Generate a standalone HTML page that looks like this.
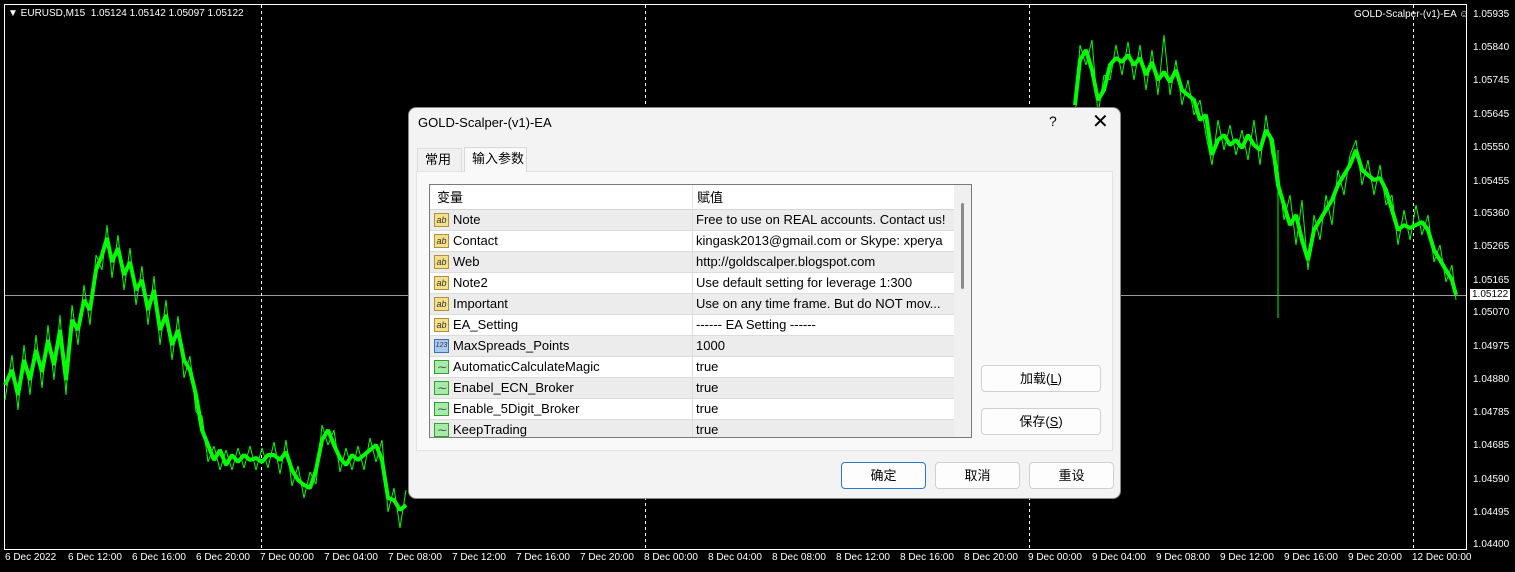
<!DOCTYPE html>
<html><head><meta charset="utf-8"><style>
*{margin:0;padding:0;box-sizing:border-box}
body{width:1515px;height:572px;background:#000;position:relative;overflow:hidden;font-family:"Liberation Sans","Noto Sans CJK SC",sans-serif}
.ax{position:absolute;color:#fff;font-size:10px;white-space:nowrap}
.dlg{position:absolute;left:408px;top:107px;width:713px;height:392px;background:#f3f3f3;border:1px solid #888;border-radius:8px;overflow:hidden;font-size:13px;color:#000}
.row{position:absolute;left:0;width:524px;height:21px;border-bottom:1px solid #dcdcdc}
.row span{position:absolute;top:2px}
.ic{position:absolute;left:4px;top:3px;width:15px;height:14px;border:1px solid #b09040;background:#f5e08a;font-size:9px;line-height:12px;text-align:center;color:#333}
.btn{position:absolute;background:#fdfdfd;border:1px solid #d0d0d0;border-radius:4px;text-align:center;font-size:13px;line-height:25px}
</style></head><body>
<svg width="1515" height="572" style="position:absolute;left:0;top:0">
<rect x="4.5" y="4.5" width="1462" height="545" fill="none" stroke="#fff" stroke-width="1"/>
<line x1="5" y1="295.5" x2="1466" y2="295.5" stroke="#9a9a9a"/>
<g stroke="#fff" stroke-dasharray="3,3"><line x1="261.5" y1="5" x2="261.5" y2="549"/><line x1="645.5" y1="5" x2="645.5" y2="549"/><line x1="1029.5" y1="5" x2="1029.5" y2="549"/><line x1="1413.5" y1="5" x2="1413.5" y2="549"/></g>
<g fill="none" stroke="#00ff00" stroke-linejoin="bevel">
<polyline stroke-width="4" points="5,385 12,370 18,395 24,360 30,380 36,350 42,372 48,340 54,365 60,330 66,380 72,320 78,330 84,300 90,310 96,270 102,255 107,238 112,262 118,248 124,275 130,262 136,290 142,280 148,310 154,290 160,330 166,315 172,345 178,330 184,360 190,370 196,395 202,430 208,445 214,460 220,450 226,465 232,455 238,462 244,455 250,460 256,458 262,462 268,455 274,455 280,460 286,452 292,470 298,480 304,485 310,488 316,470 322,440 328,430 334,445 340,458 346,465 352,455 358,460 364,455 370,450 376,445 382,460 388,498 394,500 400,510 406,505"/>
<polyline stroke-width="1" points="5,400 12,355 18,410 24,345 30,395 36,335 42,388 48,325 54,380 60,315 66,395 72,305 78,345 84,285 90,325 96,255 102,270 107,225 112,278 118,235 124,290 130,248 136,305 142,266 148,325 154,276 160,345 166,300 172,360 178,316 184,378 190,356 196,412 202,416 208,462 214,446 220,470 226,450 232,470 238,448 244,468 250,446 256,470 262,448 268,468 274,442 280,474 286,440 292,486 298,466 304,498 310,472 316,484 322,425 328,445 334,430 340,472 346,448 352,470 358,446 364,470 370,438 376,462 382,440 388,512 394,488 400,528 406,490"/>
<polyline stroke-width="4" points="1075,105 1080,60 1086,50 1092,70 1098,100 1104,90 1110,65 1116,58 1122,62 1128,55 1134,65 1140,58 1146,75 1152,62 1158,80 1164,72 1170,82 1176,70 1182,90 1188,95 1194,100 1200,120 1206,115 1212,155 1218,140 1224,135 1230,145 1236,140 1242,148 1248,135 1254,145 1260,150 1266,130 1272,140 1278,185 1284,205 1290,225 1296,215 1302,240 1308,260 1314,230 1320,220 1326,210 1332,200 1338,185 1344,175 1350,165 1356,150 1362,170 1368,175 1374,180 1380,178 1386,190 1392,210 1398,230 1404,225 1410,228 1416,225 1422,222 1428,230 1434,250 1440,260 1446,270 1452,280 1456,295"/>
<polyline stroke-width="1" points="1075,120 1080,45 1086,65 1092,40 1098,115 1104,75 1110,80 1116,45 1122,75 1128,42 1134,80 1140,45 1146,90 1152,50 1158,95 1164,35 1170,95 1176,60 1182,105 1188,80 1194,115 1200,100 1206,135 1212,165 1218,120 1224,150 1230,125 1236,155 1242,130 1248,160 1254,120 1260,165 1266,115 1272,155 1278,170 1284,220 1290,195 1296,245 1302,200 1308,270 1314,215 1320,240 1326,195 1332,225 1338,170 1344,195 1350,155 1356,140 1362,185 1368,160 1374,195 1380,165 1386,205 1392,195 1398,245 1404,210 1410,240 1416,205 1422,235 1428,215 1434,262 1440,245 1446,282 1452,265 1456,300"/>
<line x1="1278" y1="150" x2="1278" y2="318" stroke-width="1"/>
</g>
</svg>
<div class="ax" style="left:8px;top:8px;font-size:10px">▼ EURUSD,M15&nbsp; 1.05124 1.05142 1.05097 1.05122</div>
<div class="ax" style="left:1354px;top:9px">GOLD-Scalper-(v1)-EA ☺</div>
<div class="ax" style="left:1473px;top:9px">1.05935</div>
<div class="ax" style="left:1473px;top:42px">1.05840</div>
<div class="ax" style="left:1473px;top:75px">1.05745</div>
<div class="ax" style="left:1473px;top:109px">1.05645</div>
<div class="ax" style="left:1473px;top:142px">1.05550</div>
<div class="ax" style="left:1473px;top:176px">1.05455</div>
<div class="ax" style="left:1473px;top:208px">1.05360</div>
<div class="ax" style="left:1473px;top:241px">1.05265</div>
<div class="ax" style="left:1473px;top:275px">1.05165</div>
<div class="ax" style="left:1470px;top:289px;background:#fff;color:#000;padding:0 2px">1.05122</div>
<div class="ax" style="left:1473px;top:307px">1.05070</div>
<div class="ax" style="left:1473px;top:341px">1.04975</div>
<div class="ax" style="left:1473px;top:374px">1.04880</div>
<div class="ax" style="left:1473px;top:407px">1.04785</div>
<div class="ax" style="left:1473px;top:440px">1.04685</div>
<div class="ax" style="left:1473px;top:474px">1.04590</div>
<div class="ax" style="left:1473px;top:507px">1.04495</div>
<div class="ax" style="left:1473px;top:539px">1.04400</div>
<div class="ax" style="left:4px;top:552px;width:1462px;height:10px">
<span style="position:absolute;left:1px">6 Dec 2022</span><span style="position:absolute;left:64px">6 Dec 12:00</span><span style="position:absolute;left:128px">6 Dec 16:00</span><span style="position:absolute;left:192px">6 Dec 20:00</span><span style="position:absolute;left:256px">7 Dec 00:00</span><span style="position:absolute;left:320px">7 Dec 04:00</span><span style="position:absolute;left:384px">7 Dec 08:00</span><span style="position:absolute;left:448px">7 Dec 12:00</span><span style="position:absolute;left:512px">7 Dec 16:00</span><span style="position:absolute;left:576px">7 Dec 20:00</span><span style="position:absolute;left:640px">8 Dec 00:00</span><span style="position:absolute;left:704px">8 Dec 04:00</span><span style="position:absolute;left:768px">8 Dec 08:00</span><span style="position:absolute;left:832px">8 Dec 12:00</span><span style="position:absolute;left:896px">8 Dec 16:00</span><span style="position:absolute;left:960px">8 Dec 20:00</span><span style="position:absolute;left:1024px">9 Dec 00:00</span><span style="position:absolute;left:1088px">9 Dec 04:00</span><span style="position:absolute;left:1152px">9 Dec 08:00</span><span style="position:absolute;left:1216px">9 Dec 12:00</span><span style="position:absolute;left:1280px">9 Dec 16:00</span><span style="position:absolute;left:1344px">9 Dec 20:00</span><span style="position:absolute;left:1408px">12 Dec 00:00</span>
</div>

<div class="dlg">
<div style="position:absolute;left:9px;top:7px;font-size:13px">GOLD-Scalper-(v1)-EA</div>
<div style="position:absolute;left:640px;top:5px;font-size:14px">?</div>
<div style="position:absolute;left:683px;top:1px;font-size:20px;font-weight:300">✕</div>
<div style="position:absolute;left:8px;top:40px;width:45px;height:24px;border:1px solid #ddd;border-bottom:none;background:#f0f0f0;padding:0 0 0 7px;line-height:22px">常用</div>
<div style="position:absolute;left:55px;top:39px;width:63px;height:25px;border:1px solid #d8d8d8;border-bottom:none;background:#f9f9f9;padding:0 0 0 7px;line-height:22px;z-index:2">输入参数</div>
<div style="position:absolute;left:7px;top:63px;width:697px;height:280px;background:#f9f9f9;border:1px solid #e2e2e2"></div>
<div style="position:absolute;left:20px;top:76px;width:543px;height:254px;border:1px solid #7a7a7a;background:#fff;overflow:hidden">
 <div style="position:absolute;left:0;top:0;width:524px;height:25px;border-bottom:1px solid #d5d5d5"><span style="position:absolute;left:7px;top:2px">变量</span><span style="position:absolute;left:267px;top:2px">赋值</span></div>
 <div style="position:absolute;left:262px;top:0;width:1px;height:25px;background:#e5e5e5"></div>
 <div class="row" style="top:25px;background:#ececec"><i class="ic">ab</i><span style="left:23px">Note</span><span style="left:266px">Free to use on REAL accounts. Contact us!</span></div>
 <div class="row" style="top:46px"><i class="ic">ab</i><span style="left:23px">Contact</span><span style="left:266px">kingask2013@gmail.com or Skype: xperya</span></div>
 <div class="row" style="top:67px;background:#ececec"><i class="ic">ab</i><span style="left:23px">Web</span><span style="left:266px">http://goldscalper.blogspot.com</span></div>
 <div class="row" style="top:88px"><i class="ic">ab</i><span style="left:23px">Note2</span><span style="left:266px">Use default setting for leverage 1:300</span></div>
 <div class="row" style="top:109px;background:#ececec"><i class="ic">ab</i><span style="left:23px">Important</span><span style="left:266px">Use on any time frame. But do NOT mov...</span></div>
 <div class="row" style="top:130px"><i class="ic">ab</i><span style="left:23px">EA_Setting</span><span style="left:266px">------ EA Setting ------</span></div>
 <div class="row" style="top:151px;background:#ececec"><i class="ic" style="background:#a8c8f0;border-color:#4070b0;font-size:7px">123</i><span style="left:23px">MaxSpreads_Points</span><span style="left:266px">1000</span></div>
 <div class="row" style="top:172px"><i class="ic" style="background:#a8eaa8;border-color:#30a030">⁓</i><span style="left:23px">AutomaticCalculateMagic</span><span style="left:266px">true</span></div>
 <div class="row" style="top:193px;background:#ececec"><i class="ic" style="background:#a8eaa8;border-color:#30a030">⁓</i><span style="left:23px">Enabel_ECN_Broker</span><span style="left:266px">true</span></div>
 <div class="row" style="top:214px"><i class="ic" style="background:#a8eaa8;border-color:#30a030">⁓</i><span style="left:23px">Enable_5Digit_Broker</span><span style="left:266px">true</span></div>
 <div class="row" style="top:235px;background:#ececec"><i class="ic" style="background:#a8eaa8;border-color:#30a030">⁓</i><span style="left:23px">KeepTrading</span><span style="left:266px">true</span></div>
 <div style="position:absolute;left:262px;top:25px;width:1px;height:230px;background:#dcdcdc"></div>
 <div style="position:absolute;left:524px;top:0;width:18px;height:254px;background:#f0f0f0"></div>
 <div style="position:absolute;left:531px;top:18px;width:3px;height:86px;background:#8a8a8a;border-radius:2px"></div>
</div>
<div class="btn" style="left:572px;top:257px;width:120px;height:27px">加载(<u>L</u>)</div>
<div class="btn" style="left:572px;top:300px;width:120px;height:27px">保存(<u>S</u>)</div>
<div class="btn" style="left:432px;top:354px;width:85px;height:27px;border:1px solid #2a78d0">确定</div>
<div class="btn" style="left:526px;top:354px;width:85px;height:27px">取消</div>
<div class="btn" style="left:620px;top:354px;width:85px;height:27px">重设</div>
</div>
</body></html>
